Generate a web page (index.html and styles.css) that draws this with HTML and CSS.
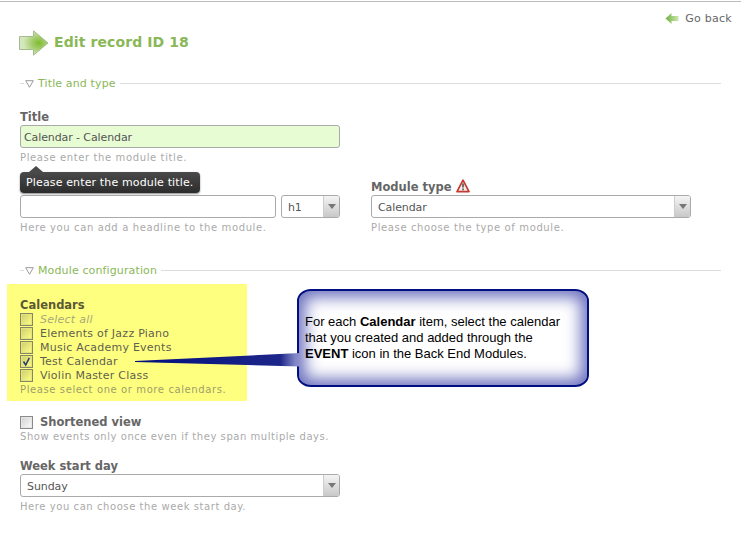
FILE: index.html
```html
<!DOCTYPE html>
<html lang="en">
<head>
<meta charset="utf-8">
<title>Edit record ID 18</title>
<link rel="stylesheet" href="styles.css">
</head>
<body>
<div class="page">
  <div class="back">
    <svg class="back-icon" width="14" height="11" viewBox="0 0 14 11"><defs><linearGradient id="bk" x1="0" x2="1" y1="0" y2="0"><stop offset="0" stop-color="#6fb23e"/><stop offset="1" stop-color="#cfe6b4"/></linearGradient></defs><path d="M0.5 5.5 6.5 0V3H13.5V8H6.5V11Z" fill="url(#bk)"/></svg>
    <span>Go back</span>
  </div>
  <h1 class="headline">
    <svg width="30" height="26" viewBox="0 0 30 26"><defs><radialGradient id="ar" cx="0.68" cy="0.5" r="0.55"><stop offset="0" stop-color="#7fbb2e"/><stop offset="0.45" stop-color="#a4cd6d"/><stop offset="1" stop-color="#d4e8bd"/></radialGradient></defs><path d="M0.5 6.5H14.5V0.8L29 13 14.5 25.2V19.5H0.5Z" fill="url(#ar)" stroke="#a6bc90"/></svg>
    <span class="headline-text">Edit record ID 18</span>
  </h1>

  <div class="legend"><span class="dash"></span><svg class="tri" width="9" height="8" viewBox="0 0 9 8"><path d="M0.7 0.7H8.3L4.5 7.3Z" fill="#fff" stroke="#9a9a9a"/></svg><span class="legend-text">Title and type</span><span class="rule"></span></div>

  <div class="fields">
    <div class="field-title">
      <div class="label">Title</div>
      <div class="input filled">Calendar - Calendar</div>
      <div class="help">Please enter the module title.</div>
    </div>
    <div class="tip"><span class="tip-arrow"></span>Please enter the module title.</div>
    <div class="cols">
      <div class="col">
        <div class="label"></div>
        <div class="pair">
          <div class="input grow"></div>
          <div class="select small"><span class="sel-text">h1</span><span class="sel-btn"><i></i></span></div>
        </div>
        <div class="help">Here you can add a headline to the module.</div>
      </div>
      <div class="col">
        <div class="label label-icon"><span>Module type</span><svg class="warn" width="14" height="14" viewBox="0 0 14 14"><path d="M7 1.2 13 12.6H1Z" fill="#f4eeee" stroke="#c6392c" stroke-width="1.7" stroke-linejoin="round"/><path d="M7 4.6V8.6M7 9.6V11.2" stroke="#444" stroke-width="1.5"/></svg></div>
        <div class="select"><span class="sel-text">Calendar</span><span class="sel-btn"><i></i></span></div>
        <div class="help">Please choose the type of module.</div>
      </div>
    </div>
  </div>

  <div class="legend second"><span class="dash"></span><svg class="tri" width="9" height="8" viewBox="0 0 9 8"><path d="M0.7 0.7H8.3L4.5 7.3Z" fill="#fff" stroke="#9a9a9a"/></svg><span class="legend-text">Module configuration</span><span class="rule"></span></div>

  <div class="marked">
    <div class="label">Calendars</div>
    <div class="check-row"><span class="box"></span><em class="all">Select all</em></div>
    <div class="check-row"><span class="box"></span><span>Elements of Jazz Piano</span></div>
    <div class="check-row"><span class="box"></span><span>Music Academy Events</span></div>
    <div class="check-row"><span class="box"><svg width="13" height="13" viewBox="0 0 13 13"><path d="M3.5 6.5 5.7 10 9.3 2.8" fill="none" stroke="#2a3a6a" stroke-width="1.5"/></svg></span><span>Test Calendar</span></div>
    <div class="check-row"><span class="box"></span><span>Violin Master Class</span></div>
    <div class="help">Please select one or more calendars.</div>
  </div>

  <div class="short">
    <div class="check-row bold"><span class="box"></span><span>Shortened view</span></div>
    <div class="help">Show events only once even if they span multiple days.</div>
  </div>

  <div class="week">
    <div class="label">Week start day</div>
    <div class="select wide"><span class="sel-text">Sunday</span><span class="sel-btn"><i></i></span></div>
    <div class="help">Here you can choose the week start day.</div>
  </div>

  <div class="callout">
    <p>For each <b>Calendar</b> item, select the calendar<br>that you created and added through the<br><b>EVENT</b> icon in the Back End Modules.</p>
  </div>
  <svg class="tail" width="168" height="20" viewBox="0 0 168 20"><defs><linearGradient id="tl" x1="0" x2="1" y1="0" y2="0"><stop offset="0" stop-color="#000f80"/><stop offset="0.88" stop-color="#1d2689"/><stop offset="0.97" stop-color="#7f84c6"/><stop offset="1" stop-color="#8f93cc"/></linearGradient></defs><path d="M0 8 165 0V13.5L0 9Z" fill="url(#tl)"/></svg>
</div>
</body>
</html>
```
FILE: styles.css
```css
* { box-sizing: border-box; }
html, body { margin: 0; padding: 0; background: #fff; }
body { height: 534px; overflow: hidden; font-family: "DejaVu Sans", Verdana, sans-serif; font-size: 11px; color: #666; }
.page { position: relative; height: 534px; border-top: 2px solid #fff; }
.page::before { content: ""; position: absolute; left: 0; right: 0; top: -1px; height: 1px; background: #bbb; }

.back { display: flex; justify-content: flex-end; align-items: center; gap: 6px; height: 14px; margin: 9px 9px 0 0; font-size: 11px; letter-spacing: 0.25px; color: #666; }
.headline { display: flex; align-items: center; gap: 5px; margin: 5px 0 0 19px; height: 26px; font-size: 14px; font-weight: bold; letter-spacing: 0.1px; color: #8ab858; }
.headline-text { padding-bottom: 2px; }

.legend { display: flex; align-items: center; height: 14px; margin: 20px 20px 0 20px; font-size: 11px; letter-spacing: 0.13px; color: #8ab858; }
.legend.second { margin-top: 28px; }
.dash { width: 4px; height: 1px; background: #ddd; }
.tri { margin: 1px 0 0 1px; }
.legend-text { margin-left: 4px; }
.rule { flex: 1; height: 1px; background: #ddd; margin-left: 4px; }

.fields { position: relative; padding-left: 20px; }
.field-title { width: 320px; margin-top: 20px; }
.label { height: 14px; line-height: 14px; font-size: 11.5px; font-weight: bold; color: #666; }
.label-icon { display: flex; align-items: center; gap: 4px; }
.warn { margin-top: -2px; }
.input { height: 23px; line-height: 23px; padding-left: 3px; margin-top: 1px; border: 1px solid #aaa; border-radius: 3px; background: #fff; font-size: 11px; letter-spacing: -0.1px; color: #555; }
.filled { background: #e8fcd4; width: 320px; }
.help { height: 14px; line-height: 14px; margin-top: 3px; font-size: 10px; letter-spacing: 0.62px; color: #aaa; white-space: nowrap; }

.tip { position: absolute; left: 20px; top: 62px; width: 180px; height: 21px; padding-left: 6px; line-height: 21px; border-radius: 4px; background: linear-gradient(#4a4a4a, #2c2c2c); box-shadow: 0 1px 2px #888; color: #fff; font-size: 11px; letter-spacing: 0.14px; white-space: nowrap; }
.tip-arrow { position: absolute; left: 9px; top: -6px; width: 0; height: 0; border-left: 7px solid transparent; border-right: 7px solid transparent; border-bottom: 6px solid #4a4a4a; }

.cols { display: grid; grid-template-columns: 320px 320px; column-gap: 31px; margin-top: 15px; }
.pair { display: flex; gap: 5px; }
.grow { flex: 1; }
.select { display: flex; height: 23px; margin-top: 1px; border: 1px solid #aaa; border-radius: 3px; background: #fff; overflow: hidden; }
.small { width: 59px; flex: none; }
.sel-text { flex: 1; line-height: 23px; padding-left: 6px; font-size: 11px; letter-spacing: -0.1px; color: #555; }
.sel-btn { width: 16px; display: flex; align-items: center; justify-content: center; border-left: 1px solid #ccc; background: linear-gradient(#f4f4f4, #c8c8c8); }
.sel-btn i { width: 0; height: 0; border-left: 4px solid transparent; border-right: 4px solid transparent; border-top: 5px solid #777; }
.wide { width: 320px; }

.marked { width: 240px; height: 117px; margin: 7px 0 0 7px; padding: 14px 0 0 13px; background: #ffff7f; color: #5d5d3e; }
.marked .label { color: #5a5a35; }
.marked .help { color: #9d9d6a; margin-top: 1px; letter-spacing: 0.6px; }
.check-row { display: flex; align-items: center; gap: 7px; height: 14px; font-size: 11px; color: #666; }
.marked .check-row { color: #5f5f50; letter-spacing: 0.25px; }
.box { width: 13px; height: 13px; border: 1px solid #8a8a8a; background: linear-gradient(135deg, #cfcfcf, #fdfdfd); flex: none; box-shadow: inset 0 0 0 1px #e6e6e6; position: relative; }
.marked .box { border-color: #85856a; background: linear-gradient(135deg, #cdcd6a, #ffff8a); box-shadow: inset 0 0 0 1px #e4e47a; }
.box svg { position: absolute; left: -1px; top: -1px; }
.all { color: #a8a87a; }
.bold { font-weight: bold; font-size: 11.5px; }

.short { margin: 14px 0 0 20px; }
.short .help { margin-top: 1px; letter-spacing: 0.55px; }
.week { margin: 15px 0 0 20px; }
.week .help { margin-top: 3px; letter-spacing: 0.57px; }

.tail { position: absolute; left: 135px; top: 351px; }
.callout { position: absolute; left: 297px; top: 287px; width: 292px; height: 98px; padding: 23px 4px 0 6px; border: 2px solid #000f80; border-radius: 14px / 12px; background: #fff; box-shadow: inset 0 0 16px 6px #6a6fbd; font-family: "Liberation Sans", Arial, sans-serif; font-size: 13px; line-height: 16px; color: #000; white-space: nowrap; }
.callout p { margin: 0; }
```
